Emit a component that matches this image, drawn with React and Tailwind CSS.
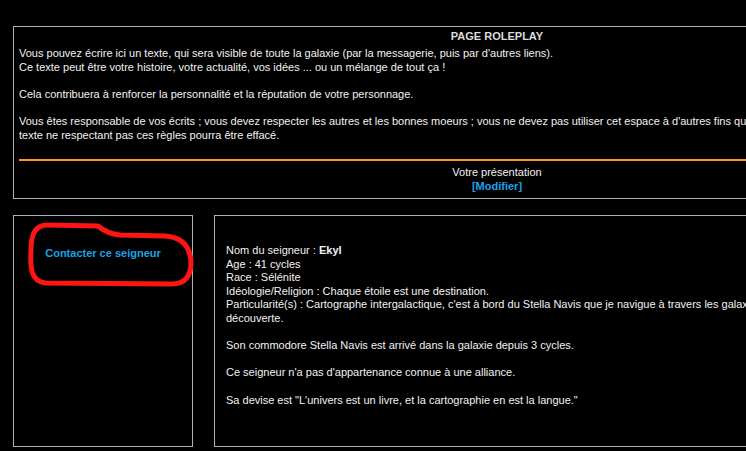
import React from "react";

const font = { fontFamily: '"Liberation Sans", Arial, sans-serif' };

function ScribbleCircle() {
  // red annotation drawn around the contact link
  return (
    <svg
      className="absolute left-0 top-0 pointer-events-none"
      width="746"
      height="451"
      viewBox="0 0 746 451"
    >
      <path
        d="M42 226 C34 228 31 236 31 250 C30 268 31 281 45 283 L172 284 C186 284 191 275 191 262 C190 246 182 237 165 236 L120 235 C110 234 104 231 98 226 L48 225 C45 225 43 225 42 226 Z"
        fill="none"
        stroke="#ff1414"
        strokeWidth="5"
        strokeLinejoin="round"
      />
    </svg>
  );
}

export default function App() {
  return (
    <div className="relative w-[746px] h-[451px] overflow-hidden bg-black" style={font}>
      <div className="w-[1000px] pl-[13px] pt-[26px] text-[11px] leading-[13.6px] text-[#f2f2f2]">
        {/* Page roleplay */}
        <div className="w-[968px] h-[173px] border border-[#a9b3c1] px-[5px]">
          <div className="text-center font-bold text-[#dcdcdc] pt-[2px] leading-[14px]">PAGE ROLEPLAY</div>
          <div className="mt-[4px] h-[96px]">
            Vous pouvez écrire ici un texte, qui sera visible de toute la galaxie (par la messagerie, puis par d'autres liens).
            <br />
            Ce texte peut être votre histoire, votre actualité, vos idées ... ou un mélange de tout ça !
            <br />
            <br />
            Cela contribuera à renforcer la personnalité et la réputation de votre personnage.
            <br />
            <br />
            Vous êtes responsable de vos écrits ; vous devez respecter les autres et les bonnes moeurs ; vous ne devez pas utiliser cet espace à d'autres fins que roleplay. Tout
            <br />
            texte ne respectant pas ces règles pourra être effacé.
          </div>
          <div className="mt-[16px] h-[2px] bg-[#ff9a10]" />
          <div className="mt-[5px] text-center">
            <div>Votre présentation</div>
            <a className="font-bold text-[#1ba3e6]">[Modifier]</a>
          </div>
        </div>

        {/* Seigneur */}
        <div className="mt-[16px] flex gap-[21px]">
          <div className="w-[180px] h-[232px] border border-[#a9b3c1] pt-[31px] text-center">
            <a className="font-bold text-[#1ba3e6]">Contacter ce seigneur</a>
          </div>
          <div className="w-[780px] h-[232px] border border-[#a9b3c1] pl-[11px] pt-[28px]">
            <div>
              Nom du seigneur : <b>Ekyl</b>
            </div>
            <div>Age : 41 cycles</div>
            <div>Race : Sélénite</div>
            <div>Idéologie/Religion : Chaque étoile est une destination.</div>
            <div className="w-[610px]">
              Particularité(s) : Cartographe intergalactique, c'est à bord du Stella Navis que je navigue à travers les galaxies en quête de découverte.
            </div>
            <div className="mt-[13.6px]">Son commodore Stella Navis est arrivé dans la galaxie depuis 3 cycles.</div>
            <div className="mt-[13.6px]">Ce seigneur n'a pas d'appartenance connue à une alliance.</div>
            <div className="mt-[13.6px]">Sa devise est "L'univers est un livre, et la cartographie en est la langue."</div>
          </div>
        </div>
      </div>
      <ScribbleCircle />
    </div>
  );
}
